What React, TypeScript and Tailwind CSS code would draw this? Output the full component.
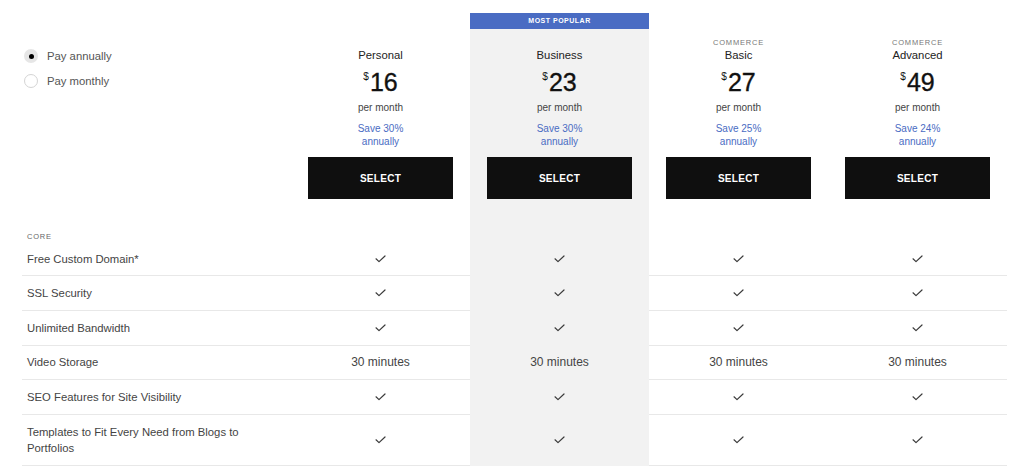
const plans = [
  { name: 'Personal', tag: '', price: '16', save: 'Save 30%', popular: false },
  { name: 'Business', tag: '', price: '23', save: 'Save 30%', popular: true },
  { name: 'Basic', tag: 'COMMERCE', price: '27', save: 'Save 25%', popular: false },
  { name: 'Advanced', tag: 'COMMERCE', price: '49', save: 'Save 24%', popular: false },
];

const features: { label: string; value: string; h: string }[] = [
  { label: 'Free Custom Domain*', value: 'check', h: 'h-[34px]' },
  { label: 'SSL Security', value: 'check', h: 'h-[34.8px]' },
  { label: 'Unlimited Bandwidth', value: 'check', h: 'h-[34.8px]' },
  { label: 'Video Storage', value: '30 minutes', h: 'h-[34.8px]' },
  { label: 'SEO Features for Site Visibility', value: 'check', h: 'h-[34.8px]' },
  { label: 'Templates to Fit Every Need from Blogs to Portfolios', value: 'check', h: 'h-[51px]' },
];

const Check = () => (
  <svg width="11" height="8" viewBox="0 0 11 8" fill="none">
    <path d="M1 3.8 L4 6.6 L10 1" stroke="#3a3a3a" strokeWidth="1.2" strokeLinecap="round" strokeLinejoin="round" />
  </svg>
);

const grid = 'grid grid-cols-[269px_179px_179px_179px_179px]';

const App = () => {
  return (
    <div className="w-[1024px] h-[468px] overflow-hidden bg-white pt-[13px] pl-[22px] font-['Liberation_Sans',Arial,sans-serif] text-[#333]">
      {/* header */}
      <div className={grid}>
        <div className="pt-[35px] pl-[2px] flex flex-col gap-[9px] text-[11.3px] text-[#555]">
          <div className="flex items-center gap-[9px] h-[16px]">
            <span className="w-[14px] h-[14px] rounded-full bg-[#e6e6e6] flex items-center justify-center">
              <span className="w-[5px] h-[5px] rounded-full bg-black" />
            </span>
            Pay annually
          </div>
          <div className="flex items-center gap-[9px] h-[16px]">
            <span className="w-[14px] h-[14px] rounded-full border border-[#d4d4d4] bg-white" />
            Pay monthly
          </div>
        </div>
        {plans.map((p) => (
          <div key={p.name} className="flex flex-col">
            {p.popular ? (
              <div className="h-[16px] bg-[#4a6cc3] text-white text-[7px] font-bold tracking-[0.5px] flex items-center justify-center">
                MOST POPULAR
              </div>
            ) : (
              <div className="h-[16px]" />
            )}
            <div className={`flex flex-col items-center pt-[9px] pb-[16px] ${p.popular ? 'bg-[#f2f2f2]' : ''}`}>
              <div className="h-[10px] leading-[10px] text-[7.5px] tracking-[0.8px] text-[#777]">{p.tag}</div>
              <div className="h-[14px] leading-[14px] text-[11.3px] text-[#222]">{p.name}</div>
              <div className="mt-[6px] h-[28px] flex items-start text-[#111]">
                <span className="text-[10px] leading-[14px] mt-[2px] mr-[1px]">$</span>
                <span className="text-[25px] leading-[28px] [-webkit-text-stroke:0.35px_#111]">{p.price}</span>
              </div>
              <div className="mt-[6px] text-[10px] leading-[12px] text-[#444]">per month</div>
              <div className="mt-[8px] text-[10px] leading-[13px] text-[#4a6cc3] text-center">
                {p.save}
                <br />
                annually
              </div>
              <button className="mt-[9px] w-[145px] h-[42px] bg-[#0f0f0f] text-white text-[10px] font-bold tracking-[0.3px]">
                SELECT
              </button>
            </div>
          </div>
        ))}
      </div>

      {/* section label */}
      <div className={grid}>
        <div className="pl-[5px] h-[27px] flex items-end text-[7.5px] tracking-[0.8px] text-[#666]">CORE</div>
        <div />
        <div className="bg-[#f2f2f2]" />
        <div />
        <div />
      </div>

      {/* feature rows */}
      {features.map((f) => (
        <div key={f.label} className={grid}>
          <div
            className={`pl-[5px] pr-[20px] border-b border-[#e8e8e8] flex items-center text-[11.3px] leading-[16px] text-[#444] ${f.h}`}
          >
            {f.label}
          </div>
          {plans.map((p) => (
            <div
              key={p.name}
              className={`border-b flex items-center justify-center text-[12px] text-[#444] ${
                p.popular ? 'bg-[#f2f2f2] border-[#f2f2f2]' : 'border-[#e8e8e8]'
              }`}
            >
              {f.value === 'check' ? <Check /> : f.value}
            </div>
          ))}
        </div>
      ))}
    </div>
  );
};

export default App;
